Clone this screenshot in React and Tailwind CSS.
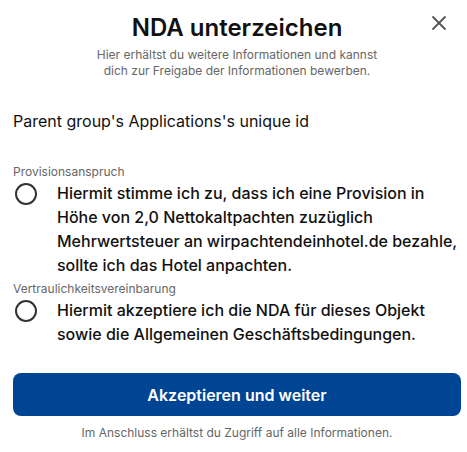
export default function App() {
  const font = { fontFamily: "Inter, 'Noto Sans', sans-serif" };

  return (
    <div className="w-[467px] h-[452px] bg-white text-[#111]" style={font}>
      <div className="relative pl-[13px] pr-[6px] pt-[13px]">
        {/* close */}
        <button className="absolute right-[20px] top-[15px] w-[16px] h-[16px] text-[#555]">
          <svg viewBox="0 0 16 16" width="16" height="16" fill="none" stroke="currentColor" strokeWidth="1.8" strokeLinecap="round">
            <path d="M2 2 L14 14 M14 2 L2 14" />
          </svg>
        </button>

        <h1 className="text-center text-[24px] leading-[30px] font-semibold">NDA unterzeichen</h1>
        <p className="mt-[4px] text-center text-[12px] leading-[16px] text-[#666]">
          Hier erhältst du weitere Informationen und kannst
          <br />
          dich zur Freigabe der Informationen bewerben.
        </p>

        <p className="mt-[30px] text-[16px] leading-[24px]">Parent group's Applications's unique id</p>

        <div className="mt-[31px]">
          <div className="text-[12px] leading-[16px] text-[#666]">Provisionsanspruch</div>
          <label className="flex gap-[20px] mt-[1px]">
            <span className="mt-[2px] ml-[2px] w-[22px] h-[22px] shrink-0 rounded-full border-2 border-[#333]" />
            <span className="text-[16px] leading-[24px] font-medium">
              Hiermit stimme ich zu, dass ich eine Provision in Höhe von 2,0 Nettokaltpachten zuzüglich Mehrwertsteuer an wirpachtendeinhotel.de bezahle, sollte ich das Hotel anpachten.
            </span>
          </label>
        </div>

        <div className="mt-[4px]">
          <div className="text-[12px] leading-[16px] text-[#666]">Vertraulichkeitsvereinbarung</div>
          <label className="flex gap-[20px] mt-[1px]">
            <span className="mt-[2px] ml-[2px] w-[22px] h-[22px] shrink-0 rounded-full border-2 border-[#333]" />
            <span className="text-[16px] leading-[24px] font-medium">
              Hiermit akzeptiere ich die NDA für dieses Objekt sowie die Allgemeinen Geschäftsbedingungen.
            </span>
          </label>
        </div>

        <button className="mt-[27px] w-full h-[43px] rounded-[8px] bg-[#004494] text-white text-[16px] font-semibold">
          Akzeptieren und weiter
        </button>
        <p className="mt-[9px] text-center text-[12px] leading-[16px] text-[#666]">
          Im Anschluss erhältst du Zugriff auf alle Informationen.
        </p>
      </div>
    </div>
  );
}
